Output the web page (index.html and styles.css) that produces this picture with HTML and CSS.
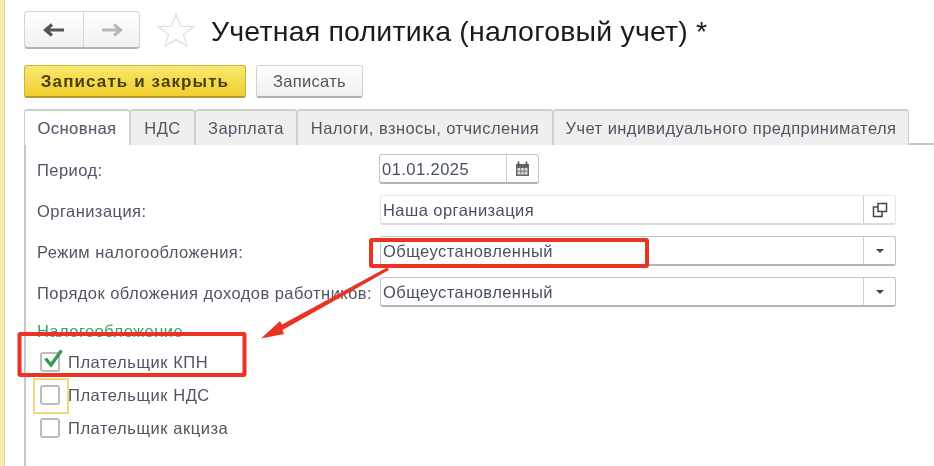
FILE: index.html
```html
<!DOCTYPE html>
<html lang="ru">
<head>
<meta charset="utf-8">
<title>Учетная политика</title>
<link rel="stylesheet" href="styles.css">
</head>
<body>
<div class="page">
  <div class="strip"></div>
  <main class="form">
    <header class="head">
      <div class="nav">
        <button class="nav-btn"><svg width="24" height="16" viewBox="0 0 24 16"><path d="M3 8h19M10 2.500L3.500 8l6.500 5.500" fill="none" stroke="#555" stroke-width="3.200"/></svg></button>
        <button class="nav-btn"><svg width="24" height="16" viewBox="0 0 24 16"><path d="M21 8H2M14 2.500L20.500 8 14 13.500" fill="none" stroke="#b8b8b8" stroke-width="3.200"/></svg></button>
      </div>
      <svg class="star" width="38" height="34" viewBox="0 0 38 34"><path d="M19 1.500l4.600 11.600 13 .6-10.200 7.700 3.600 12-11-6.800-11 6.800 3.600-12L1.400 13.700l13-.6z" fill="#fff" stroke="#dce0e3" stroke-width="1.300"/></svg>
      <h1 class="title">Учетная политика (налоговый учет) *</h1>
    </header>
    <div class="commands">
      <button class="btn btn-primary">Записать и закрыть</button>
      <button class="btn">Записать</button>
    </div>
    <div class="tabs">
      <div class="tab tab-active t1">Основная</div>
      <div class="tab t2">НДС</div>
      <div class="tab t3">Зарплата</div>
      <div class="tab t4">Налоги, взносы, отчисления</div>
      <div class="tab t5">Учет индивидуального предпринимателя</div>
    </div>
    <section class="panel">
      <div class="row">
        <label class="label">Период:</label>
        <div class="field date"><span class="value">01.01.2025</span><span class="addon">
          <svg width="15" height="16" viewBox="0 0 15 16"><path d="M1 3h13v12H1z" fill="#666"/><path d="M3.500 0.500v4M11.500 0.500v4" stroke="#555" stroke-width="1.600"/><path d="M2.500 7h10v6.500h-10z" fill="#ddd"/><path d="M5.800 7v6.500M9.200 7v6.500M2.500 10.200h10" stroke="#777"/></svg>
        </span></div>
      </div>
      <div class="row">
        <label class="label">Организация:</label>
        <div class="field field-light"><span class="value">Наша организация</span><span class="addon">
          <svg width="16" height="16" viewBox="0 0 16 16" fill="none" stroke="#444" stroke-width="1.500"><path d="M6 1.500h8.500v8H6z"/><path d="M6 5H1.500v9.500H10V10"/></svg>
        </span></div>
      </div>
      <div class="row">
        <label class="label">Режим налогообложения:</label>
        <div class="field"><span class="value">Общеустановленный</span><span class="addon"><i class="caret"></i></span></div>
      </div>
      <div class="row">
        <label class="label">Порядок обложения доходов работников:</label>
        <div class="field"><span class="value">Общеустановленный</span><span class="addon"><i class="caret"></i></span></div>
      </div>
      <h2 class="group">Налогообложение</h2>
      <div class="checks">
        <div class="check"><span class="box"><svg class="tick" width="22" height="20" viewBox="0 0 22 20"><path d="M3.500 9.500l5.500 6.500L19.500 1.500" fill="none" stroke="#38994f" stroke-width="3.400"/></svg></span><span>Плательщик КПН</span></div>
        <div class="check"><span class="box box-focus"></span><span>Плательщик НДС</span></div>
        <div class="check"><span class="box"></span><span>Плательщик акциза</span></div>
      </div>
    </section>
  </main>
</div>
<svg class="notes" width="934" height="466" viewBox="0 0 934 466">
  <rect x="371" y="240" width="276" height="26" fill="none" stroke="#ea3323" stroke-width="4" rx="1"/>
  <rect x="19.500" y="334" width="225" height="41" fill="none" stroke="#ea3323" stroke-width="4" rx="1"/>
  <path d="M387 267.500L282 324.500 280 321 261 338.500 284 334 282.500 330 389 270z" fill="#ea3323"/>
</svg>
</body>
</html>
```
FILE: styles.css
```css
* { box-sizing: border-box; }
html, body { margin: 0; height: 100%; overflow: hidden; background: #fff; }
body { position: relative; font-family: "Liberation Sans", Arial, sans-serif; color: #505562; }
.page { display: flex; height: 466px; filter: blur(0.65px); }
.strip { width: 5px; background: #f8ecab; border-right: 1px solid #e2d9a4; flex: none; }
.form { flex: 1; padding: 11px 0 0 19px; min-width: 0; }
.head { display: flex; align-items: center; height: 38px; }
.nav { display: flex; width: 116px; height: 38px; border: 1px solid #d4d4d4; border-bottom: 2px solid #b4b4b4; border-radius: 4px; background: linear-gradient(#fff, #f1f1f1); }
.nav-btn { flex: 1; border: 0; background: none; padding: 0; display: flex; align-items: center; justify-content: center; }
.nav-btn:first-child { flex: 0 0 58px; }
.nav-btn + .nav-btn { border-left: 1px solid #d8d8d8; }
.star { margin-left: 17px; flex: none; }
.title { margin: 2px 0 0 16px; font-size: 28.5px; letter-spacing: 0.2px; font-weight: 400; color: #1a1a1a; white-space: nowrap; line-height: 38px; }
.commands { display: flex; gap: 10px; margin-top: 16px; height: 33px; }
.btn { height: 33px; width: 107px; font: 16.5px "Liberation Sans", Arial, sans-serif; letter-spacing: 0.3px; color: #555; border: 1px solid #d2d2d2; border-bottom: 2px solid #b0b0b0; border-radius: 3px; background: linear-gradient(#fff, #f0f0f0); padding: 1px 0 0; }
.btn-primary { width: 222px; color: #4a3f0a; font-size: 17px; font-weight: 700; letter-spacing: 1.1px; background: linear-gradient(#f9e770, #efcf2c); border-color: #cdb43c; border-bottom-color: #b59c2c; }
.tabs { display: flex; margin-top: 11px; height: 36px; border-bottom: 2px solid #c8c8c8; }
.tab { height: 36px; padding-top: 8px; font-size: 16.5px; letter-spacing: 0.45px; text-align: center; white-space: nowrap; background: #efefef; border: 1px solid #cfcfcf; border-bottom: 0; border-radius: 3px 3px 0 0; border-top-width: 2px; }
.t1 { width: 106px; }
.t2 { width: 65px; }
.t3 { width: 102px; }
.t4 { width: 256px; }
.t5 { width: 356px; }
.tab-active { background: #fff; position: relative; z-index: 1; }
.panel { border-left: 2px solid #c8c8c8; padding: 9px 0 0 11px; height: 321px; }
.row { display: flex; align-items: center; height: 30px; margin-bottom: 11px; }
.label { width: 343px; flex: none; padding-top: 2px; font-size: 16.5px; letter-spacing: 0.45px; white-space: nowrap; }
.field { display: flex; width: 516px; height: 30px; border: 1px solid #c4c4c4; border-bottom: 2px solid #b4b4b4; border-radius: 3px; background: #fff; font-size: 16.5px; letter-spacing: 0.45px; color: #485060; }
.field-light { border-color: #e6e6e6; border-bottom-color: #dcdcdc; }
.date { width: 160px; margin-left: -1px; }
.value { flex: 1; padding: 5px 0 0 2px; }
.addon { width: 32px; flex: none; display: flex; align-items: center; justify-content: center; border-left: 1px solid #d0d0d0; }
.caret { width: 0; height: 0; border: 4px solid transparent; border-top: 4px solid #444; border-bottom: 0; }
.group { margin: 14px 0 0; height: 20px; font-size: 16.5px; letter-spacing: 0.45px; font-weight: 400; line-height: 20px; color: #3aa36c; }
.checks { display: flex; flex-direction: column; gap: 13px; margin-top: 11px; padding-left: 3px; }
.check { display: flex; align-items: center; gap: 8px; height: 20px; font-size: 16.5px; letter-spacing: 0.55px; }
.box { position: relative; width: 20px; height: 20px; flex: none; border: 2px solid #bcbcbc; border-radius: 3px; background: #fff; }
.box-focus::after { content: ""; position: absolute; left: -9px; top: -9px; width: 32px; height: 32px; border: 2px solid #f6d67c; }
.tick { position: absolute; left: 0; top: -5px; }
.notes { position: absolute; left: 0; top: 0; pointer-events: none; filter: blur(0.4px); }
```
